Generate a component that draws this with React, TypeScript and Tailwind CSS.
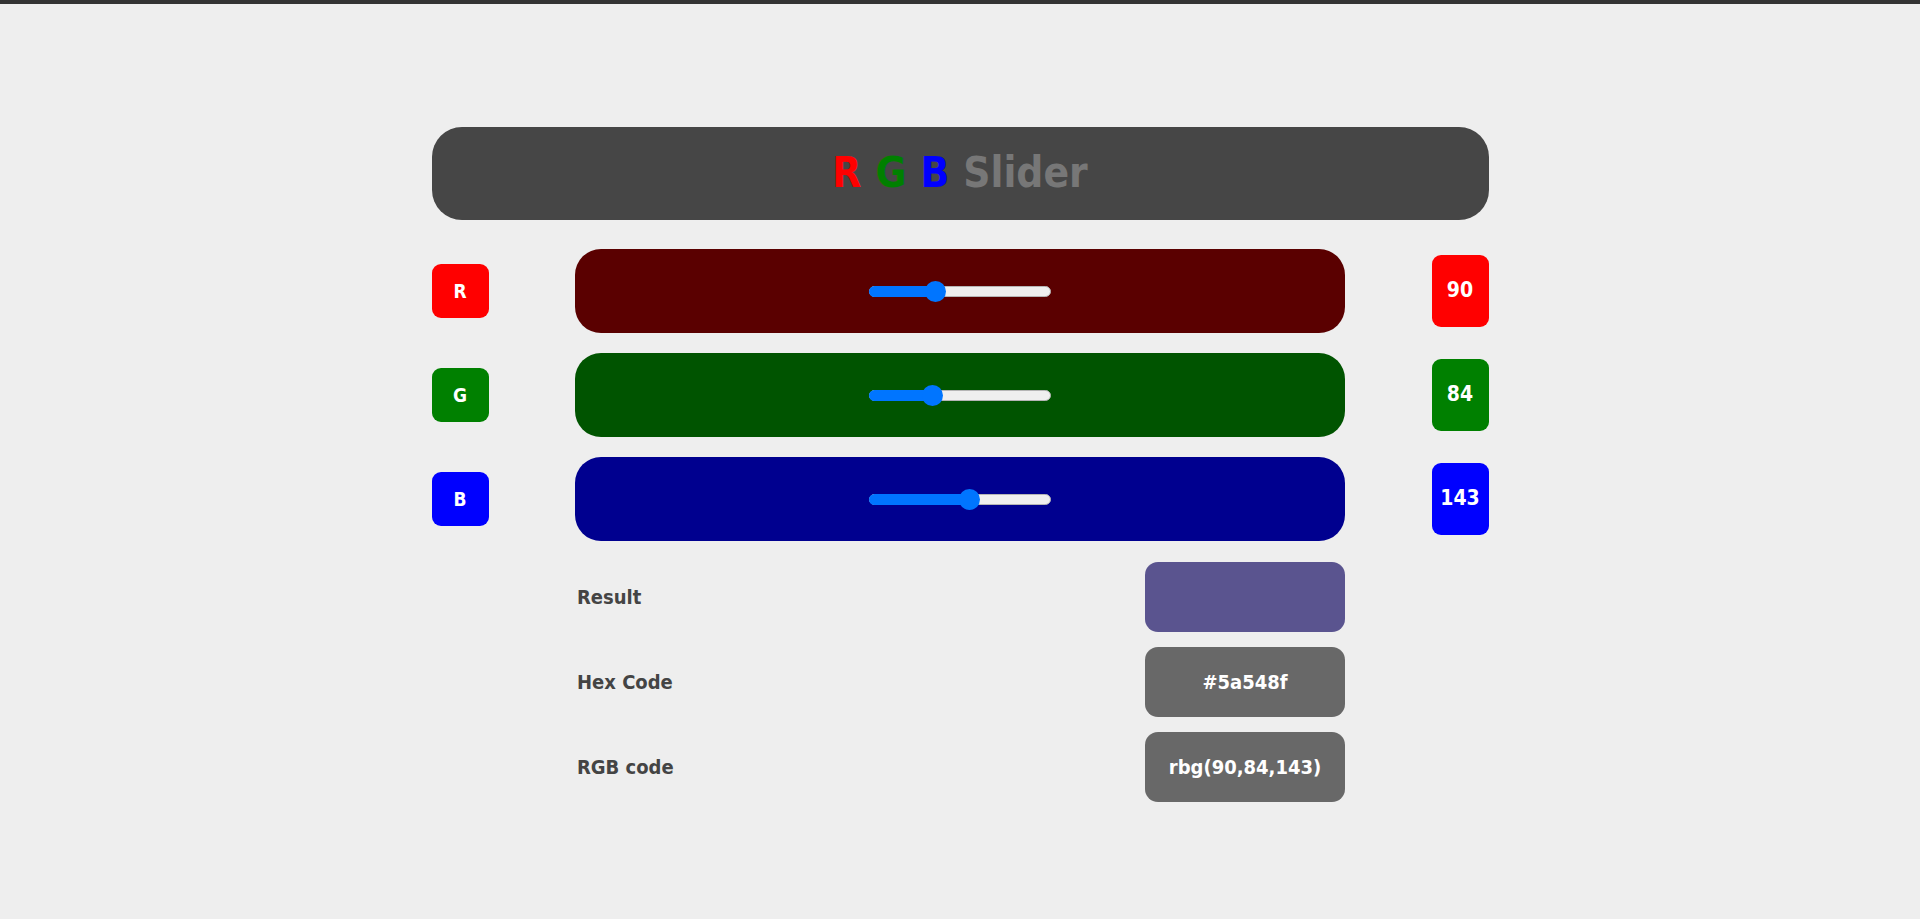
import React from "react";

const font = { fontFamily: '"Liberation Sans Narrow", "DejaVu Sans Condensed", "Noto Sans", sans-serif' };

function Slider({ value }: { value: number }) {
  const pct = value / 255;
  return (
    <div className="relative h-[21px] w-[182px] flex items-center">
      <div className="h-[11px] w-full rounded-full bg-[#efefef] border border-[#b5b5b5]" />
      <div
        className="absolute left-0 h-[11px] rounded-l-full bg-[#0075ff]"
        style={{ width: `${pct * 172 + 5}px` }}
      />
      <div
        className="absolute h-[21px] w-[21px] rounded-full bg-[#0075ff]"
        style={{ left: `${pct * 160}px` }}
      />
    </div>
  );
}

const rows = [
  { l: "R", v: 90, box: "bg-[#ff0000]", bar: "bg-[#5a0000]" },
  { l: "G", v: 84, box: "bg-[#008000]", bar: "bg-[#005400]" },
  { l: "B", v: 143, box: "bg-[#0000ff]", bar: "bg-[#00008f]" },
];

export default function App() {
  return (
    <div className="min-h-[919px] bg-[#eeeeee]" style={font}>
      <div className="h-[4px] bg-[#333333]" />
      <div className="mx-auto w-[1057px] pt-[123px]">
        <div className="h-[93px] rounded-[30px] bg-[#464646] flex items-center justify-center">
          <h1 className="text-[42px] font-bold leading-none flex gap-[14px] pb-[2px]">
            <span className="text-[#ff0000]">R</span>
            <span className="text-[#008000]">G</span>
            <span className="text-[#0000ff]">B</span>
            <span className="text-[#777777]">Slider</span>
          </h1>
        </div>
        <div className="mt-[29px] flex flex-col gap-[20px]">
          {rows.map((r) => (
            <div key={r.l} className="flex items-center justify-between h-[84px]">
              <div className={`w-[57px] h-[54px] rounded-[9px] ${r.box} flex items-center justify-center text-white font-bold text-[19px]`}>
                {r.l}
              </div>
              <div className={`w-[770px] h-[84px] rounded-[26px] ${r.bar} flex items-center justify-center`}>
                <Slider value={r.v} />
              </div>
              <div className={`w-[57px] h-[72px] rounded-[9px] ${r.box} flex items-center justify-center text-white font-bold text-[21px]`}>
                {r.v}
              </div>
            </div>
          ))}
        </div>
        <div className="mx-auto w-[770px] mt-[21px] flex flex-col gap-[15px]">
          <div className="flex items-center justify-between h-[70px]">
            <span className="pl-[2px] text-[20px] font-bold text-[#444444]">Result</span>
            <div className="w-[200px] h-[70px] rounded-[13px] bg-[#5a548f]" />
          </div>
          <div className="flex items-center justify-between h-[70px]">
            <span className="pl-[2px] text-[20px] font-bold text-[#444444]">Hex Code</span>
            <div className="w-[200px] h-[70px] rounded-[13px] bg-[#686868] flex items-center justify-center text-white font-bold text-[20px]">
              #5a548f
            </div>
          </div>
          <div className="flex items-center justify-between h-[70px]">
            <span className="pl-[2px] text-[20px] font-bold text-[#444444]">RGB code</span>
            <div className="w-[200px] h-[70px] rounded-[13px] bg-[#686868] flex items-center justify-center text-white font-bold text-[20px]">
              rbg(90,84,143)
            </div>
          </div>
        </div>
      </div>
    </div>
  );
}
